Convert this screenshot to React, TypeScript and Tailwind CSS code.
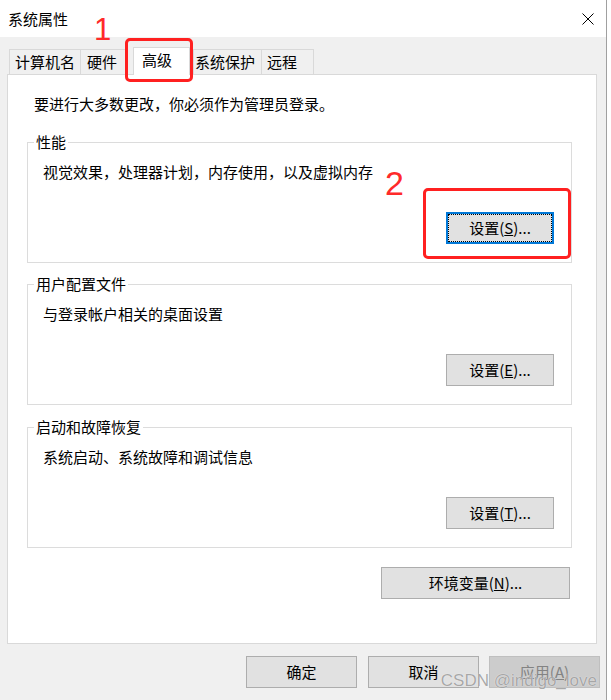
import React from "react";

const font = "font-['Noto_Sans_CJK_SC','Noto_Sans',sans-serif]";

function Btn({
  children,
  className = "",
  focused = false,
  disabled = false,
}: {
  children: React.ReactNode;
  className?: string;
  focused?: boolean;
  disabled?: boolean;
}) {
  const base = "h-[32px] flex items-center justify-center text-[15px] leading-[20px]";
  const look = focused
    ? "bg-[#e1e1e1] border-2 border-[#0078d7] outline-1 outline-dotted outline-black outline-offset-[-3px] text-black"
    : disabled
    ? "bg-[#cccccc] border border-[#bfbfbf] text-[#838383]"
    : "bg-[#e1e1e1] border border-[#adadad] text-black";
  return <div className={`${base} ${look} ${className}`}>{children}</div>;
}

function Group({
  title,
  text,
  button,
  className = "",
  focused = false,
}: {
  title: string;
  text: string;
  button: React.ReactNode;
  className?: string;
  focused?: boolean;
}) {
  return (
    <fieldset className={`ml-[19px] mr-[24px] border border-[#dcdcdc] ${className}`}>
      <legend className="ml-[6px] px-[2px] text-[15px] leading-[20px] text-black">{title}</legend>
      <div className="pt-[10px] pl-[15px] text-[15px] leading-[20px] text-black">{text}</div>
      <div className="flex justify-end pr-[17px] pt-[30px] pb-[18px]">
        <Btn focused={focused} className="w-[108px]">
          {button}
        </Btn>
      </div>
    </fieldset>
  );
}

function Tab({ label, className = "" }: { label: string; className?: string }) {
  return (
    <div
      className={`h-[25px] border border-b-0 border-[#d9d9d9] bg-[#f0f0f0] text-[15px] leading-[24px] text-black ${className}`}
    >
      {label}
    </div>
  );
}

export default function App() {
  return (
    <div className={`relative w-[611px] h-[700px] bg-white overflow-hidden ${font}`}>
      <div className="w-[607px] h-full border-r border-[#a0a0a0] flex flex-col">
        {/* title bar */}
        <div className="h-[37px] shrink-0 bg-white flex items-center justify-between pl-[8px] pr-[12px]">
          <span className="text-[15px] leading-[20px] text-black">系统属性</span>
          <svg width="12" height="12" viewBox="0 0 12 12" className="mt-[1px]">
            <path d="M0.5 0.5 L11.5 11.5 M11.5 0.5 L0.5 11.5" stroke="#000" strokeWidth="1" fill="none" />
          </svg>
        </div>

        <div className="flex-1 bg-[#f0f0f0] flex flex-col">
          {/* tabs */}
          <div className="flex items-end pl-[9px] pt-[10px] h-[37px]">
            <Tab label="计算机名" className="w-[72px] pl-[5px]" />
            <Tab label="硬件" className="w-[47px] border-l-0 pl-[6px]" />
            <div className="relative z-10 ml-[5px] -mb-px h-[28px] w-[57px] border border-b-0 border-[#d9d9d9] bg-white pl-[8px] text-[15px] leading-[24px] text-black">
              高级
            </div>
            <Tab label="系统保护" className="ml-[3px] w-[69px] pl-[1px]" />
            <Tab label="远程" className="w-[52px] border-l-0 pl-[5px]" />
          </div>

          {/* pane */}
          <div className="ml-[7px] mr-[9px] h-[570px] bg-white border border-[#d9d9d9] flex flex-col">
            <div className="pt-[19px] pl-[26px] text-[15px] leading-[20px] text-black">
              要进行大多数更改，你必须作为管理员登录。
            </div>
            <Group
              className="mt-[18px]"
              title="性能"
              text="视觉效果，处理器计划，内存使用，以及虚拟内存"
              focused
              button={
                <>
                  设置(<span className="underline">S</span>)...
                </>
              }
            />
            <Group
              className="mt-[11px]"
              title="用户配置文件"
              text="与登录帐户相关的桌面设置"
              button={
                <>
                  设置(<span className="underline">E</span>)...
                </>
              }
            />
            <Group
              className="mt-[12px]"
              title="启动和故障恢复"
              text="系统启动、系统故障和调试信息"
              button={
                <>
                  设置(<span className="underline">T</span>)...
                </>
              }
            />
            <div className="flex justify-end pr-[26px] mt-[19px]">
              <Btn className="w-[189px]">
                环境变量(<span className="underline">N</span>)...
              </Btn>
            </div>
          </div>

          {/* dialog buttons */}
          <div className="flex justify-end pr-[6px] mt-[12px]">
            <Btn className="w-[111px]">确定</Btn>
            <Btn className="w-[111px] ml-[11px]">取消</Btn>
            <Btn disabled className="w-[111px] ml-[10px]">
              应用(<span className="underline">A</span>)
            </Btn>
          </div>
        </div>
      </div>

      {/* red annotations */}
      <div className="absolute left-[125px] top-[38px] w-[68px] h-[44px] border-[3px] border-[#ff2020] rounded-[5px]" />
      <div className="absolute left-[94px] top-[12px] text-[31px] leading-[36px] text-[#ff2a2a] font-['Liberation_Sans',sans-serif]">
        1
      </div>
      <div className="absolute left-[423px] top-[188px] w-[148px] h-[71px] border-[3px] border-[#ff2020] rounded-[5px]" />
      <div className="absolute left-[385px] top-[164px] text-[34px] leading-[38px] text-[#ff2a2a] font-['Liberation_Sans',sans-serif]">
        2
      </div>

      {/* watermark */}
      <div className="absolute right-[14px] top-[671px] text-[17px] leading-[20px] text-[#8c8c8c]/75 font-['Liberation_Sans',sans-serif] [text-shadow:0_0_1px_#ffffff]">
        CSDN @indigo_love
      </div>
    </div>
  );
}
